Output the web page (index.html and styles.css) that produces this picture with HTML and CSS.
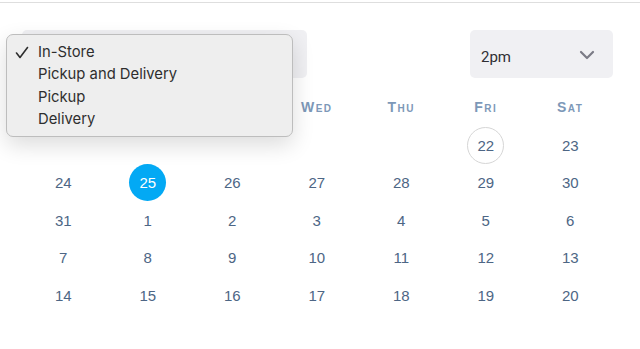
FILE: index.html
```html
<!DOCTYPE html>
<html lang="en">
<head>
    <meta charset="UTF-8">
    <meta name="viewport" content="width=device-width, initial-scale=1.0">
    <link rel="stylesheet" href="styles.css">
</head>
<body>
    <div class="page">
        <div class="controls">
            <div class="select select-type"></div>
            <div class="select select-time">
                <span>2pm</span>
                <svg class="chevron" width="16" height="10" viewBox="0 0 16 10">
                    <path d="M2 2 L8 8 L14 2" fill="none" stroke="#7b7b86" stroke-width="2.2" stroke-linecap="round" stroke-linejoin="round"/>
                </svg>
            </div>
        </div>

        <div class="calendar">
            <div class="dow">Sun</div>
            <div class="dow">Mon</div>
            <div class="dow">Tue</div>
            <div class="dow">Wed</div>
            <div class="dow">Thu</div>
            <div class="dow">Fri</div>
            <div class="dow">Sat</div>

            <div class="day"></div>
            <div class="day"></div>
            <div class="day"></div>
            <div class="day"></div>
            <div class="day"></div>
            <div class="day"><span class="today">22</span></div>
            <div class="day"><span>23</span></div>

            <div class="day"><span>24</span></div>
            <div class="day"><span class="selected">25</span></div>
            <div class="day"><span>26</span></div>
            <div class="day"><span>27</span></div>
            <div class="day"><span>28</span></div>
            <div class="day"><span>29</span></div>
            <div class="day"><span>30</span></div>

            <div class="day"><span>31</span></div>
            <div class="day"><span>1</span></div>
            <div class="day"><span>2</span></div>
            <div class="day"><span>3</span></div>
            <div class="day"><span>4</span></div>
            <div class="day"><span>5</span></div>
            <div class="day"><span>6</span></div>

            <div class="day"><span>7</span></div>
            <div class="day"><span>8</span></div>
            <div class="day"><span>9</span></div>
            <div class="day"><span>10</span></div>
            <div class="day"><span>11</span></div>
            <div class="day"><span>12</span></div>
            <div class="day"><span>13</span></div>

            <div class="day"><span>14</span></div>
            <div class="day"><span>15</span></div>
            <div class="day"><span>16</span></div>
            <div class="day"><span>17</span></div>
            <div class="day"><span>18</span></div>
            <div class="day"><span>19</span></div>
            <div class="day"><span>20</span></div>
        </div>

        <!-- native select popup, open -->
        <ul class="menu">
            <li>
                <svg class="check" width="14" height="13" viewBox="0 0 14 13">
                    <path d="M1.5 7 L5 11.5 L12.5 1.5" fill="none" stroke="#2e2e2e" stroke-width="1.6" stroke-linecap="round" stroke-linejoin="round"/>
                </svg>
                In-Store
            </li>
            <li>Pickup and Delivery</li>
            <li>Pickup</li>
            <li>Delivery</li>
        </ul>
    </div>
</body>
</html>
```

FILE: styles.css
```css
body {
    margin: 0;
    background: #fff;
    font-family: "Liberation Sans", Arial, sans-serif;
}
.page {
    position: relative;
    margin-top: 2px;
    border-top: 1px solid #dedede;
    padding: 27px 27px 0 21px;
    height: 319px;
}
.controls {
    display: flex;
    justify-content: space-between;
    padding-left: 1px;
}
.select {
    height: 48px;
    background: #f0f0f3;
    border-radius: 5px;
    box-sizing: border-box;
}
.select-type {
    width: 285px;
}
.select-time {
    width: 143px;
    display: flex;
    align-items: center;
    justify-content: space-between;
    padding: 0 18px 0 11px;
    font-family: "Roboto", sans-serif;
    font-size: 15px;
    color: #2f2f33;
}
.select-time span {
    padding-top: 5px;
}
.chevron {
    display: block;
    margin-top: 1px;
}
.calendar {
    display: grid;
    grid-template-columns: repeat(7, 84.5px);
    grid-auto-rows: 37.5px;
    margin-top: 11px;
}
.dow {
    height: 36px;
    display: flex;
    align-items: center;
    justify-content: center;
    font-variant: small-caps;
    font-weight: 700;
    font-size: 14px;
    letter-spacing: 1.5px;
    color: #7d98b8;
}
.day {
    display: flex;
    align-items: center;
    justify-content: center;
    font-size: 15px;
    color: #4d6685;
}
.day span {
    width: 37px;
    height: 37px;
    border-radius: 50%;
    box-sizing: border-box;
    display: flex;
    align-items: center;
    justify-content: center;
}
.day .today {
    border: 1px solid #d6d6d6;
}
.day .selected {
    background: #03a9f4;
    color: #fff;
}
.menu {
    position: absolute;
    left: 6px;
    top: 31px;
    width: 287px;
    height: 103px;
    box-sizing: border-box;
    margin: 0;
    padding: 6px 0 0 31px;
    list-style: none;
    background: #eeeeee;
    border: 1px solid #bdbdbd;
    border-radius: 7px;
    box-shadow: 0 8px 22px rgba(0, 0, 0, 0.14);
    font-family: "Inter", "Noto Sans", sans-serif;
    font-size: 14.8px;
    line-height: 22.4px;
    color: #2e2e2e;
}
.menu li {
    position: relative;
}
.check {
    position: absolute;
    left: -23px;
    top: 5px;
}
```
